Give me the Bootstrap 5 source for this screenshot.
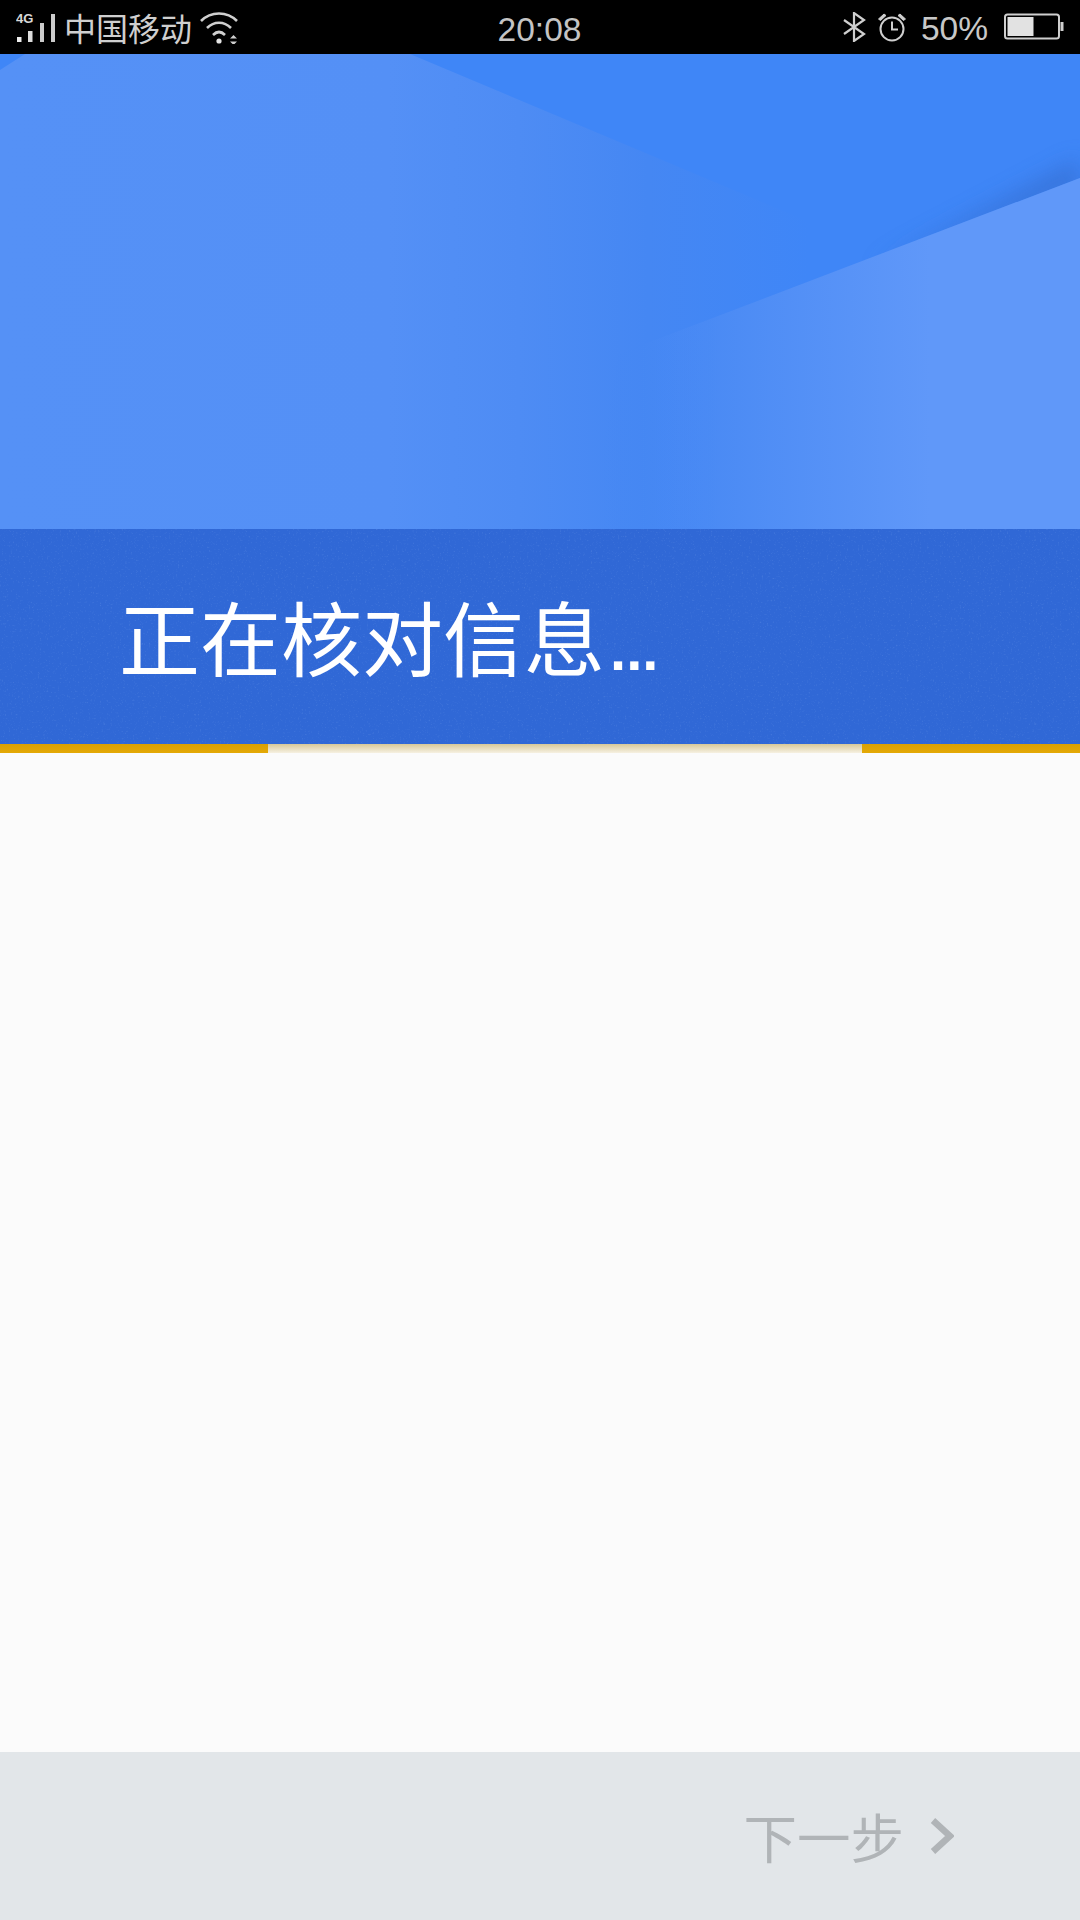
<!DOCTYPE html>
<html lang="zh-CN">
<head>
<meta charset="utf-8">
<title>正在核对信息</title>
<link href="https://cdn.jsdelivr.net/npm/bootstrap@5.3.0/dist/css/bootstrap.min.css" rel="stylesheet">
<style>
html,body{margin:0;padding:0;width:1080px;height:1920px;overflow:hidden;background:#fbfbfb;}
.app-page{width:1080px;height:1920px;font-family:"Liberation Sans","Noto Sans CJK SC",sans-serif;}
.status-row{height:54px;background:#000;color:#cfcfcf;padding:0 16px 0 16px;font-size:32px;line-height:54px;flex:none;}
.status-side{flex:1 1 0;}
.carrier{font-family:"Noto Sans CJK SC",sans-serif;font-weight:400;font-size:32px;line-height:54px;margin-left:6px;margin-right:8px;}
.clock{font-size:33.500px;font-weight:400;color:#c4c4c4;padding-top:6px;margin-left:-1px;}
.pct{font-size:33.500px;color:#c8c8c8;margin:0 16px 0 14px;padding-top:3px;}
.gap-bt{margin-left:10px;}
.hero-art{height:475px;flex:none;display:block;width:1080px;}
.title-band{height:215px;background:#3068d6;flex:none;position:relative;padding:46px 0 0 119px;overflow:hidden;}
.grain{position:absolute;inset:0;width:100%;height:100%;}
.title-text{position:relative;font-family:"Noto Sans CJK SC",sans-serif;font-weight:400;font-size:81px;line-height:120px;color:#fff;white-space:nowrap;}
.title-dots{font-family:"Liberation Sans",sans-serif;font-weight:700;font-size:58px;margin-left:5px;}
.prog-row{height:9px;flex:none;}
.prog-a{width:268px;background:linear-gradient(#daa003,#e4a906);}
.prog-b{width:218px;background:linear-gradient(#daa003,#e4a906);}
.prog-track{background:linear-gradient(#d8c898,#f6f1e2);}
.blank-area{flex:1 1 auto;background:#fbfbfb;}
.foot-row{height:168px;background:#e2e6e9;flex:none;padding-right:126px;}
.foot-label{font-family:"Noto Sans CJK SC",sans-serif;font-weight:400;font-size:53.500px;line-height:60px;color:#b0b4b7;margin-right:26px;}
</style>
</head>
<body>
<div class="app-page d-flex flex-column">
  <div class="status-row d-flex align-items-center">
    <div class="status-side d-flex align-items-center">
      <svg width="42" height="36" viewBox="0 0 42 36">
        <text x="0" y="14" font-family="Liberation Sans" font-weight="700" font-size="13" fill="#d8d8d8">4G</text>
        <rect x="1" y="28" width="4.500" height="5" fill="#eee"/>
        <rect x="12" y="22" width="4.500" height="11" fill="#ddd"/>
        <rect x="24" y="14" width="4" height="19" fill="#ccc"/>
        <rect x="35" y="5" width="4" height="28" fill="#ccc"/>
      </svg>
      <span class="carrier">中国移动</span>
      <svg width="40" height="34" viewBox="0 0 40 34" fill="none" stroke="#cfcfcf" stroke-width="2.600">
        <path d="M1 11C11 1 27 1 37 11"/>
        <path d="M7 18C14 11 24 11 31 18"/>
        <path d="M13 25C17 21 21 21 25 25"/>
        <circle cx="19" cy="31" r="2.600" fill="#e4e4e4" stroke="none"/>
        <path d="M30 28.500h7l-3.500-3.500zM30 31.500h7l-3.500 3.500z" fill="#cfcfcf" stroke="none"/>
      </svg>
    </div>
    <div class="clock">20:08</div>
    <div class="status-side d-flex align-items-center justify-content-end">
      <svg width="24" height="30" viewBox="0 0 24 30" fill="none" stroke="#cfcfcf" stroke-width="2.200">
        <path d="M1 8L21 22L11 29V1L21 8L1 22"/>
      </svg>
      <svg class="gap-bt" width="30" height="30" viewBox="0 0 30 30" fill="none" stroke="#cfcfcf" stroke-width="2">
        <circle cx="15" cy="17" r="11.500"/>
        <path d="M15 9.500V17.500H21"/>
        <path d="M1.500 7L7 2L9 3.500L3.500 8.500ZM28.500 7L23 2L21 3.500L26.500 8.500Z" fill="#cfcfcf" stroke-width="1"/>
      </svg>
      <span class="pct">50%</span>
      <svg width="60" height="28" viewBox="0 0 60 28" fill="none">
        <rect x="1" y="1.500" width="54" height="24" rx="2.500" stroke="#cfcfcf" stroke-width="2"/>
        <rect x="3.500" y="4" width="26" height="19" fill="#e2e2e2"/>
        <rect x="56.500" y="9" width="3" height="9" fill="#cfcfcf"/>
      </svg>
    </div>
  </div>

  <svg class="hero-art" viewBox="0 0 1080 475" preserveAspectRatio="none">
    <defs>
      <linearGradient id="gl" gradientUnits="userSpaceOnUse" x1="0" y1="0" x2="1080" y2="0">
        <stop offset="0" stop-color="#5591f6"/>
        <stop offset=".36" stop-color="#5490f6"/>
        <stop offset=".48" stop-color="#4e8cf4"/>
        <stop offset=".6" stop-color="#4587f3"/>
        <stop offset=".75" stop-color="#3f86f7"/>
      </linearGradient>
      <linearGradient id="gb" gradientUnits="userSpaceOnUse" x1="600" y1="0" x2="720" y2="0">
        <stop offset="0" stop-color="#4587f3" stop-opacity="0"/>
        <stop offset="1" stop-color="#4587f3"/>
      </linearGradient>
      <linearGradient id="gr" gradientUnits="userSpaceOnUse" x1="640" y1="0" x2="930" y2="0">
        <stop offset="0" stop-color="#6098f9" stop-opacity="0"/>
        <stop offset=".25" stop-color="#6098f9" stop-opacity=".2"/>
        <stop offset="1" stop-color="#6098f9"/>
      </linearGradient>
      <filter id="bl" x="-30%" y="-100%" width="160%" height="300%"><feGaussianBlur stdDeviation="11"/></filter>
    </defs>
    <rect width="1080" height="475" fill="#3f86f7"/>
    <path d="M25 0H410L850 185V475H0V16Z" fill="url(#gl)"/>
    <path d="M870 215L1080 105V135Z" fill="#3268c8" opacity=".6" filter="url(#bl)"/>
    <path d="M1080 124L618 300L590 475H1080Z" fill="url(#gb)"/>
    <path d="M1080 124L618 300L590 475H1080Z" fill="url(#gr)"/>
  </svg>

  <div class="title-band">
    <svg class="grain">
      <filter id="nz"><feTurbulence type="fractalNoise" baseFrequency=".55" numOctaves="2" seed="4"/><feColorMatrix values="0 0 0 0 .55  0 0 0 0 .72  0 0 0 0 1  0 0 0 1.6 -.95"/></filter>
      <rect width="100%" height="100%" filter="url(#nz)" opacity=".25"/>
    </svg>
    <div class="title-text">正在核对信息<span class="title-dots">...</span></div>
  </div>

  <div class="prog-row d-flex">
    <div class="prog-a"></div>
    <div class="prog-track flex-grow-1"></div>
    <div class="prog-b"></div>
  </div>

  <div class="blank-area"></div>

  <div class="foot-row d-flex align-items-center justify-content-end">
    <span class="foot-label">下一步</span>
    <svg width="24" height="36" viewBox="0 0 24 36" fill="none" stroke="#b0b4b7" stroke-width="6.500">
      <path d="M3 2.500L20 18L3 33.500"/>
    </svg>
  </div>
</div>
<script src="https://cdn.jsdelivr.net/npm/bootstrap@5.3.0/dist/js/bootstrap.bundle.min.js"></script>
</body>
</html>
